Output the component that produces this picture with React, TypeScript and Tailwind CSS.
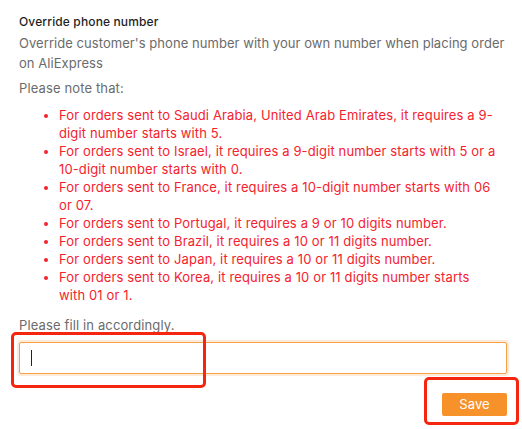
export default function App() {
  const notes = [
    'For orders sent to Saudi Arabia, United Arab Emirates, it requires a 9-digit number starts with 5.',
    'For orders sent to Israel, it requires a 9-digit number starts with 5 or a 10-digit number starts with 0.',
    'For orders sent to France, it requires a 10-digit number starts with 06 or 07.',
    'For orders sent to Portugal, it requires a 9 or 10 digits number.',
    'For orders sent to Brazil, it requires a 10 or 11 digits number.',
    'For orders sent to Japan, it requires a 10 or 11 digits number.',
    'For orders sent to Korea, it requires a 10 or 11 digits number starts with 01 or 1.',
  ];

  return (
    <div className="relative w-[522px] h-[429px] bg-white font-['Inter','Liberation_Sans',sans-serif] text-[13px] tracking-[0.01em]">
      <div className="pl-[19px] pr-[15px] pt-[12px]">
        <h1 className="leading-[20px] text-[12px] font-medium text-[#1f1f1f]">Override phone number</h1>
        <p className="mt-[1px] leading-[20px] text-[#6b6b6b] tracking-[0.004em]">
          Override customer's phone number with your own number when placing order on AliExpress
        </p>
        <p className="mt-[5px] leading-[20px] text-[#6b6b6b]">Please note that:</p>
        <ul className="mt-[8px] list-disc pl-[40px] pr-[10px] leading-[18px] text-[#f5222d]">
          {notes.map((note, idx) => (
            <li key={idx}>{note}</li>
          ))}
        </ul>
        <p className="mt-[11px] leading-[20px] text-[#6b6b6b]">Please fill in accordingly.</p>
        <div className="mt-[7px] h-[32px] w-[488px] rounded-[2px] border border-[#f7a04a] shadow-[0_0_0_2px_#fdebd9] flex items-center pl-[11px]">
          <div className="w-[1px] h-[16px] bg-[#222]" />
        </div>
        <div className="mt-[19px] flex justify-end w-[488px]">
          <button className="h-[23px] w-[65px] rounded-[2px] bg-[#f7922a] text-white text-[13px] leading-[23px]">
            Save
          </button>
        </div>
      </div>

      <div className="absolute left-[11px] top-[332px] w-[195px] h-[56px] rounded-[5px] border-[3px] border-[#f5260f]" />
      <div className="absolute left-[424px] top-[377px] w-[95px] h-[48px] rounded-[5px] border-[3px] border-[#f5260f]" />
    </div>
  );
}
